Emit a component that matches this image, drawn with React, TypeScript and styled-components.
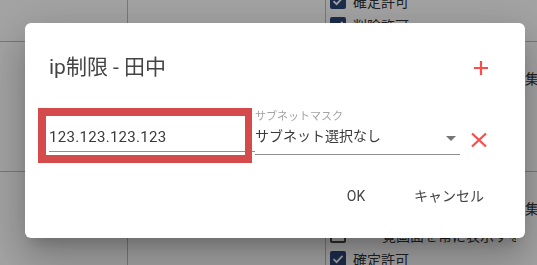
import React from 'react';
import styled, { createGlobalStyle } from 'styled-components';

const GlobalStyle = createGlobalStyle`
  html, body {
    margin: 0;
    padding: 0;
    background: #fff;
    overflow: hidden;
  }
  body {
    font-family: Roboto, "Noto Sans CJK JP", sans-serif;
    color: #333;
  }
`;

// page underneath the modal
const Table = styled.div`
  display: grid;
  grid-template-columns: 128px 198px 190px 1fr;
  grid-template-rows: 80px 130px 1fr;
  width: 537px;
  height: 303px;
  margin-top: -38px;
  overflow: hidden;
`;

const Cell = styled.div<{ $divider?: boolean; $last?: boolean }>`
  box-sizing: border-box;
  min-width: 0;
  overflow: hidden;
  border-bottom: ${({ $last }) => ($last ? 'none' : '1px solid #bdbdbd')};
  border-right: ${({ $divider }) => ($divider ? '1px solid #bdbdbd' : 'none')};
`;

const CheckList = styled(Cell)`
  display: flex;
  flex-direction: column;
  padding: 3px 0 0 4px;
`;

const CheckItem = styled.div<{ $indent?: number }>`
  display: flex;
  align-items: center;
  gap: 7px;
  height: 24px;
  flex-shrink: 0;
  font-size: 14px;
  white-space: nowrap;

  span {
    padding-left: ${({ $indent }) => $indent ?? 0}px;
  }
`;

const Box = styled.div<{ $checked: boolean }>`
  box-sizing: border-box;
  width: 16px;
  height: 16px;
  border-radius: 2px;
  flex-shrink: 0;
  display: flex;
  align-items: center;
  justify-content: center;
  background: ${({ $checked }) => ($checked ? '#2b4577' : '#fff')};
  border: ${({ $checked }) => ($checked ? 'none' : '2px solid #444')};
`;

const SummaryCell = styled(Cell)`
  padding: 27px 0 0 9px;
  font-size: 14px;
  line-height: 20px;
  white-space: nowrap;
`;

const Backdrop = styled.div`
  position: fixed;
  inset: 0;
  background: rgba(0, 0, 0, 0.36);
  display: flex;
  align-items: flex-start;
  padding: 23px 0 0 25px;
`;

const Dialog = styled.div`
  position: relative;
  width: 500px;
  height: 215px;
  background: #fff;
  border-radius: 6px;
  box-shadow: 0px 11px 15px -7px rgba(0, 0, 0, 0.2),
    0px 24px 38px 3px rgba(0, 0, 0, 0.14), 0px 9px 46px 8px rgba(0, 0, 0, 0.12);
  display: flex;
  flex-direction: column;
`;

const TitleRow = styled.div`
  display: flex;
  align-items: center;
  justify-content: space-between;
  padding: 28px 32px 0 24px;
`;

const Title = styled.h2`
  margin: 0;
  font-size: 21px;
  line-height: 32px;
  font-weight: 400;
  color: #444;
`;

const IconButton = styled.button<{ $top?: number; $left?: number }>`
  width: 24px;
  height: 24px;
  padding: 0;
  margin-top: ${({ $top }) => $top ?? 0}px;
  margin-left: ${({ $left }) => $left ?? 0}px;
  border: none;
  background: transparent;
  display: flex;
  align-items: center;
  justify-content: center;
  cursor: pointer;
  flex-shrink: 0;
`;

const FieldRow = styled.div`
  display: flex;
  align-items: flex-start;
  padding-left: 24px;
  margin-top: 25px;
`;

const TextField = styled.div`
  width: 206px;
  margin-top: 19px;
  padding-bottom: 4px;
  border-bottom: 1px solid #8f8f8f;
  font-size: 15px;
  line-height: 20px;
  letter-spacing: 0.3px;
  color: #3a3a3a;
`;

const SelectField = styled.div`
  position: relative;
  width: 205px;
  display: flex;
  flex-direction: column;
`;

const SelectLabel = styled.label`
  font-size: 11px;
  line-height: 14px;
  color: #a3a3a3;
  margin-top: 2px;
`;

const SelectValue = styled.div`
  margin-top: 2px;
  padding-bottom: 8px;
  border-bottom: 1px solid #8f8f8f;
  font-size: 14px;
  line-height: 20px;
  color: #3a3a3a;
`;

const Arrow = styled.svg`
  position: absolute;
  right: 4px;
  top: 28px;
`;

const Highlight = styled.div`
  position: absolute;
  left: 13px;
  top: 85px;
  width: 214px;
  height: 55px;
  box-sizing: border-box;
  border: 8px solid #d54b4b;
  border-right-width: 7px;
  pointer-events: none;
`;

const Actions = styled.div`
  margin-top: auto;
  display: flex;
  justify-content: flex-end;
  gap: 18px;
  padding: 0 33px 24px 0;
`;

const TextButton = styled.button`
  min-width: 64px;
  padding: 6px 8px;
  border: none;
  background: transparent;
  font-family: Roboto, "Noto Sans CJK JP", sans-serif;
  font-size: 14px;
  line-height: 24px;
  color: #444;
  cursor: pointer;
`;

const Check = () => (
  <svg width="12" height="12" viewBox="0 0 12 12">
    <polyline points="1.5,6.2 4.6,9.2 10.5,2.8" fill="none" stroke="#fff" strokeWidth="1.8" />
  </svg>
);

type Item = { label: string; checked: boolean; indent?: number };

const rowA: Item[] = [
  { label: '閲覧許可', checked: true },
  { label: '確定許可', checked: true },
  { label: '削除許可', checked: true },
];
const rowB: Item[] = [
  { label: '閲覧許可', checked: true },
  { label: '編集許可', checked: true },
  { label: '確定許可', checked: false },
  { label: '削除許可', checked: true },
  { label: '出力許可', checked: false },
];
const rowC: Item[] = [
  { label: '閲覧許可', checked: true },
  { label: '編集許可', checked: true },
  { label: '一覧画面を常に表示する', checked: false, indent: 15 },
  { label: '確定許可', checked: true },
];

function Checks({ items, last }: { items: Item[]; last?: boolean }) {
  return (
    <CheckList $last={last}>
      {items.map((it, i) => (
        <CheckItem key={i} $indent={it.indent}>
          <Box $checked={it.checked}>{it.checked && <Check />}</Box>
          <span>{it.label}</span>
        </CheckItem>
      ))}
    </CheckList>
  );
}

export default function App() {
  return (
    <>
      <GlobalStyle />
      <Table>
        <Cell $divider />
        <Cell $divider />
        <Checks items={rowA} />
        <SummaryCell />

        <Cell $divider />
        <Cell $divider />
        <Checks items={rowB} />
        <SummaryCell>集計許可</SummaryCell>

        <Cell $divider $last />
        <Cell $divider $last />
        <Checks items={rowC} last />
        <SummaryCell $last>集計許可</SummaryCell>
      </Table>

      <Backdrop>
        <Dialog>
          <TitleRow>
            <Title>ip制限 - 田中</Title>
            <IconButton aria-label="追加" $top={1}>
              <svg width="24" height="24" viewBox="0 0 24 24">
                <path d="M12 5v14M5 12h14" stroke="#ff4a4a" strokeWidth="2.2" fill="none" />
              </svg>
            </IconButton>
          </TitleRow>

          <FieldRow>
            <TextField>123.123.123.123</TextField>
            <SelectField>
              <SelectLabel>サブネットマスク</SelectLabel>
              <SelectValue>サブネット選択なし</SelectValue>
              <Arrow width="10" height="5" viewBox="0 0 10 5">
                <path d="M0 0h10L5 5z" fill="#757575" />
              </Arrow>
            </SelectField>
            <IconButton aria-label="削除" $top={20} $left={7}>
              <svg width="24" height="24" viewBox="0 0 24 24">
                <path d="M5 5.5l14 13M19 5.5l-14 13" stroke="#ff4a4a" strokeWidth="2.2" fill="none" />
              </svg>
            </IconButton>
          </FieldRow>

          <Actions>
            <TextButton>OK</TextButton>
            <TextButton>キャンセル</TextButton>
          </Actions>

          <Highlight />
        </Dialog>
      </Backdrop>
    </>
  );
}
